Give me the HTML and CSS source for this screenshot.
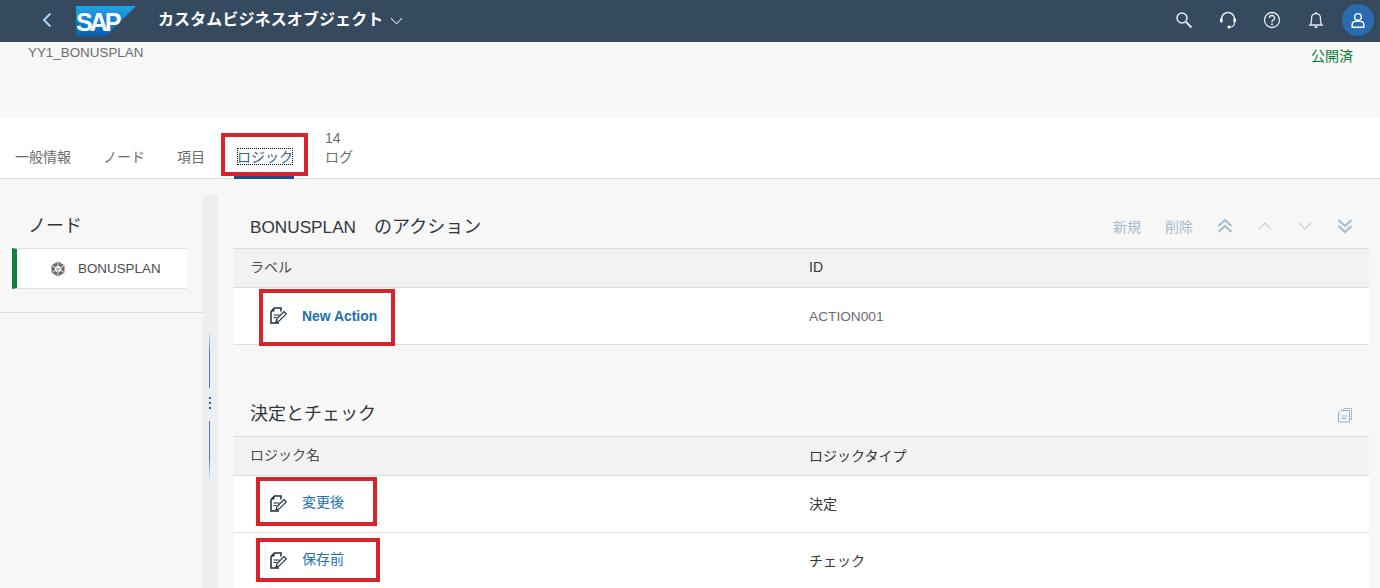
FILE: index.html
```html
<!DOCTYPE html>
<html lang="ja">
<head>
<meta charset="utf-8">
<title>カスタムビジネスオブジェクト</title>
<link rel="stylesheet" href="styles.css">
</head>
<body>
<header class="shell">
  <svg class="back" viewBox="0 0 12 18" width="12" height="18"><path d="M9.500 2.500 3 9l6.500 6.500" fill="none" stroke="#a9d0f5" stroke-width="2"/></svg>
  <svg class="logo" viewBox="0 0 60 30" width="60" height="30">
    <defs><linearGradient id="g" x1="0" y1="0" x2="0" y2="1"><stop offset="0" stop-color="#1ea5e8"/><stop offset="1" stop-color="#0a5fb4"/></linearGradient></defs>
    <polygon points="0,0 60,0 30,30 0,30" fill="url(#g)"/>
    <text x="0" y="24.500" class="logo-text">SAP</text>
  </svg>
  <h1 class="app-title">カスタムビジネスオブジェクト</h1>
  <svg class="caret" viewBox="0 0 14 8" width="13" height="8"><path d="M1 1l6 6 6-6" fill="none" stroke="#d5dde5" stroke-width="1.200"/></svg>
  <div class="shell-actions">
    <svg viewBox="0 0 18 18" width="18" height="18"><circle cx="7" cy="7" r="5" fill="none" stroke="#e3e8ed" stroke-width="1.500"/><path d="M11 11l5.500 5.500" stroke="#e3e8ed" stroke-width="2"/></svg>
    <svg viewBox="0 0 18 18" width="18" height="18"><path d="M2.500 9.500V8a6.500 6.500 0 0 1 13 0v1.500" fill="none" stroke="#e3e8ed" stroke-width="1.500"/><path d="M1 7.500h2.500v4h-1A1.500 1.500 0 0 1 1 10zM14.500 7.500H17V10a1.500 1.500 0 0 1-1.500 1.500h-1z" fill="#fff"/><path d="M15.500 11.500c0 3-2 4.500-5 4.500" fill="none" stroke="#e3e8ed" stroke-width="1.200"/><circle cx="10" cy="16" r="1.600" fill="#fff"/></svg>
    <svg viewBox="0 0 18 18" width="18" height="18"><circle cx="9" cy="9" r="7.500" fill="none" stroke="#e3e8ed" stroke-width="1.300"/><path d="M6.500 7a2.500 2.500 0 1 1 3.700 2.200C9.300 9.700 9 10.200 9 11.200" fill="none" stroke="#e3e8ed" stroke-width="1.400"/><circle cx="9" cy="13.300" r="1" fill="#e3e8ed"/></svg>
    <svg viewBox="0 0 18 18" width="18" height="18"><path d="M3 14c1.200-1 1.500-2.300 1.500-4.500V7a4.500 4.500 0 0 1 9 0v2.500c0 2.200.3 3.500 1.500 4.500z" fill="none" stroke="#e3e8ed" stroke-width="1.300"/><path d="M7.500 16h3" stroke="#e3e8ed" stroke-width="1.800"/><path d="M9 1v1.500" stroke="#e3e8ed" stroke-width="1.500"/></svg>
    <div class="avatar">
      <svg viewBox="0 0 18 18" width="16" height="17"><circle cx="9" cy="5" r="3.700" fill="none" stroke="#fff" stroke-width="1.600"/><path d="M2.500 16.500v-3a3.500 3.500 0 0 1 3.500-3.500h6a3.500 3.500 0 0 1 3.500 3.500v3z" fill="none" stroke="#fff" stroke-width="1.600"/></svg>
    </div>
  </div>
</header>

<section class="object-header">
  <span class="object-id">YY1_BONUSPLAN</span>
  <span class="status">公開済</span>
</section>

<nav class="tabs">
  <a class="tab">一般情報</a>
  <a class="tab">ノード</a>
  <a class="tab">項目</a>
  <a class="tab tab-active"><span class="focus">ロジック</span><i class="mark mark-tab"></i></a>
  <a class="tab tab-count"><span class="count">14</span>ログ</a>
</nav>

<main class="content">
  <aside class="side">
    <h2 class="side-title">ノード</h2>
    <div class="node">
      <svg viewBox="0 0 16 16" width="16" height="16">
        <path d="M8 .5l6.500 3.700v7.600L8 15.500l-6.500-3.700V4.200z" fill="#6e6e6e"/>
        <path d="M8 4.500l3.200 1.800v3.400L8 11.500 4.800 9.700V6.300z" fill="#f4f4f4"/>
        <path d="M8 .5v4M1.500 11.800l3.300-2.100M14.500 11.800l-3.300-2.100M1.500 4.200l3.300 2.100M14.500 4.200l-3.300 2.100M8 11.500v4" stroke="#f4f4f4" stroke-width=".9"/>
        <path d="M5.800 7.300 8 8.500l2.200-1.200M8 8.500v2" fill="none" stroke="#7a7a7a" stroke-width=".9"/>
      </svg>
      <span>BONUSPLAN</span>
    </div>
  </aside>
  <div class="splitter">
    <span class="split-line"></span>
    <span class="split-dots"></span>
    <span class="split-line split-line-b"></span>
  </div>
  <div class="main">
    <div class="toolbar toolbar-first">
      <h2 class="section-title"><span class="latin">BONUSPLAN</span>　のアクション</h2>
      <div class="tools">
        <span class="tool-text">新規</span>
        <span class="tool-text">削除</span>
        <svg class="tool-icon" viewBox="0 0 16 16" width="16" height="16"><path d="M1.500 8 8 2l6.500 6M1.500 14 8 8l6.500 6" fill="none" stroke="#a9bdd0" stroke-width="2.200"/></svg>
        <svg class="tool-icon" viewBox="0 0 16 16" width="16" height="16"><path d="M2 11l6-6 6 6" fill="none" stroke="#c6d0da" stroke-width="1.100"/></svg>
        <svg class="tool-icon" viewBox="0 0 16 16" width="16" height="16"><path d="M2 5l6 6 6-6" fill="none" stroke="#c6d0da" stroke-width="1.100"/></svg>
        <svg class="tool-icon" viewBox="0 0 16 16" width="16" height="16"><path d="M1.500 2 8 8l6.500-6M1.500 8 8 14l6.500-6" fill="none" stroke="#a9bdd0" stroke-width="2.200"/></svg>
      </div>
    </div>
    <div class="row row-head"><span class="col-a">ラベル</span><span class="col-b">ID</span></div>
    <div class="row">
      <span class="col-a link-cell">
        <svg class="doc" viewBox="0 0 17 17" width="17" height="17"><use href="#doc-icon"/></svg>
        <a class="link link-strong">New Action</a>
        <i class="mark mark-action"></i>
      </span>
      <span class="col-b muted">ACTION001</span>
    </div>

    <div class="toolbar toolbar-second">
      <h2 class="section-title">決定とチェック</h2>
      <div class="tools">
        <svg class="copy" viewBox="0 0 16 16" width="16" height="16"><path d="M5.500 3.500 7.500 1.500H14.500V12.500H12.500" fill="none" stroke="#a9bdd0" stroke-width="1"/><path d="M1.500 6 4 3.500H12.500V15H1.500z" fill="#f7f7f7" stroke="#97afc6" stroke-width="1"/><path d="M4.500 9h5M4.500 11.500h5" stroke="#97afc6"/></svg>
      </div>
    </div>
    <div class="row row-head"><span class="col-a">ロジック名</span><span class="col-b">ロジックタイプ</span></div>
    <div class="row">
      <span class="col-a link-cell">
        <svg class="doc" viewBox="0 0 17 17" width="17" height="17"><use href="#doc-icon"/></svg>
        <a class="link">変更後</a>
        <i class="mark mark-after"></i>
      </span>
      <span class="col-b col-cjk">決定</span>
    </div>
    <div class="row row-last">
      <span class="col-a link-cell">
        <svg class="doc" viewBox="0 0 17 17" width="17" height="17"><use href="#doc-icon"/></svg>
        <a class="link">保存前</a>
        <i class="mark mark-before"></i>
      </span>
      <span class="col-b col-cjk">チェック</span>
    </div>
  </div>
</main>

<svg class="defs" width="0" height="0">
  <defs>
    <g id="doc-icon">
      <path d="M1 4.500 4.500 1h6.500V4.500M1 4.500v11.500h8" fill="none" stroke="#1d2d3e" stroke-width="1.500"/>
      <path d="M1 4.500h3.500V1z" fill="#1d2d3e"/>
      <path d="M6 15 7 11.500 14 4.500 16.300 6.800 9.300 13.800z" fill="#fff" stroke="#1d2d3e" stroke-width="1.200"/>
      <path d="M3.500 8h6M3.500 10.500h3" stroke="#1d2d3e"/>
    </g>
  </defs>
</svg>
</body>
</html>
```

FILE: styles.css
```css
* { box-sizing: border-box; }
html, body { margin: 0; padding: 0; }
body {
  width: 1380px;
  height: 588px;
  overflow: hidden;
  background: #f7f7f7;
  color: #32363a;
  font-family: "Liberation Sans", "Noto Sans CJK JP", sans-serif;
  font-size: 14px;
}
h1, h2 { margin: 0; font-weight: 400; }

.shell {
  display: flex;
  align-items: center;
  height: 42px;
  padding-left: 41px;
  background: #354a5f;
}
.back { flex: none; margin-bottom: 2px; }
.logo { flex: none; margin-left: 23px; }
.logo-text {
  font-family: "Liberation Sans", sans-serif;
  font-size: 25px;
  font-weight: 700;
  letter-spacing: -3px;
  fill: #fff;
}
.app-title {
  margin: -6px 0 0 22px;
  font-family: "Noto Sans CJK JP", sans-serif;
  font-size: 16px;
  font-weight: 700;
  color: #fff;
  white-space: nowrap;
  letter-spacing: .1px;
}
.caret { flex: none; margin-left: 7px; margin-top: -1px; }
.shell-actions {
  display: flex;
  align-items: center;
  gap: 26px;
  margin-left: auto;
  margin-bottom: 2px;
  padding-right: 6px;
}
.avatar {
  display: flex;
  align-items: center;
  justify-content: center;
  width: 32px;
  height: 32px;
  margin-left: -9px;
  border-radius: 50%;
  background: #2a6bb0;
}

.object-header {
  display: flex;
  justify-content: space-between;
  align-items: flex-start;
  height: 75px;
  padding: 3px 27px 0 28px;
  background: #f7f7f7;
}
.object-id { font-size: 13.400px; line-height: 16px; color: #6a6d70; }
.status {
  margin-top: -1px;
  font-family: "Noto Sans CJK JP", sans-serif;
  font-size: 14px;
  line-height: 22px;
  color: #107e3e;
}

.tabs {
  display: flex;
  align-items: flex-end;
  gap: 32px;
  height: 62px;
  padding: 0 0 0 15px;
  background: #fff;
  border-bottom: 1px solid #d9d9d9;
  box-shadow: 0 1px 2px rgba(0,0,0,.06);
  font-family: "Noto Sans CJK JP", sans-serif;
  color: #6a6d70;
}
.tab {
  position: relative;
  display: block;
  height: 32px;
  font-size: 14px;
  line-height: 20px;
}
.tab-active { color: #346187; }
.tab-active::after {
  content: "";
  position: absolute;
  left: -3px;
  right: -1px;
  bottom: -1px;
  height: 3px;
  background: #1c4c8c;
}
.focus { display: block; outline: 1px dotted #111; outline-offset: -1px; line-height: 17px; margin-top: 2px; }
.tab-count { height: 48px; }
.count {
  display: block;
  font-family: "Liberation Sans", sans-serif;
  font-size: 14px;
  line-height: 16px;
}

.mark {
  position: absolute;
  display: block;
  border: 4px solid #d8232a;
  pointer-events: none;
}
.mark-tab { left: -16px; top: -13px; width: 87px; height: 43px; z-index: 2; }
.mark-action { left: 25px; top: 1px; width: 136px; height: 57px; }
.mark-after { left: 22px; top: 1px; width: 121px; height: 49px; }
.mark-before { left: 22px; top: 5px; width: 124px; height: 44px; }

.content {
  display: flex;
  height: 409px;
  background: #f7f7f7;
}
.side {
  flex: none;
  width: 203px;
  height: 134px;
  padding: 34px 0 0 12px;
  border-bottom: 1px solid #dcdcdc;
}
.side-title {
  padding-left: 16px;
  font-family: "Noto Sans CJK JP", sans-serif;
  font-size: 18px;
  line-height: 22px;
  color: #32363a;
}
.node {
  display: flex;
  align-items: center;
  gap: 12px;
  width: 175px;
  height: 41px;
  margin-top: 13px;
  padding-left: 33px;
  background: #fff;
  border-left: 5px solid #107e3e;
  border-top: 1px solid #e2e2e2;
  border-bottom: 1px solid #e2e2e2;
  font-size: 13.400px;
  color: #4a4d50;
}
.splitter {
  position: relative;
  flex: none;
  display: flex;
  flex-direction: column;
  align-items: center;
  width: 15px;
  margin-top: 16px;
  padding: 135px 2px 0 0;
  background: #eceff2;
}
.split-line { width: 1px; height: 58px; background: linear-gradient(#eceff2, #4a7ab0 40%, #4a7ab0); }
.split-line-b { height: 60px; background: linear-gradient(#4a7ab0, #4a7ab0 60%, #eceff2); }
.split-dots {
  width: 2px;
  height: 14px;
  margin: 9px 0 10px;
  background: repeating-linear-gradient(#346187 0 2px, transparent 2px 5px);
}
.main {
  flex: none;
  width: 1135px;
  margin-left: 16px;
}
.toolbar {
  display: flex;
  justify-content: space-between;
  align-items: center;
  padding: 0 16px 0 16px;
}
.toolbar-first { height: 69px; padding-top: 26px; }
.toolbar-first .tools { margin-bottom: 2px; }
.toolbar-second { height: 91px; padding-top: 47px; }
.section-title {
  font-family: "Liberation Sans", "Noto Sans CJK JP", sans-serif;
  font-size: 18px;
  line-height: 22px;
  color: #32363a;
}
.latin { font-size: 17.200px; }
.tools { display: flex; align-items: center; gap: 24px; }
.tool-text {
  font-family: "Noto Sans CJK JP", sans-serif;
  font-size: 14px;
  color: #a9bbcc;
}
.tool-icon { flex: none; }
.copy { margin-top: 2px; }

.row {
  display: flex;
  align-items: center;
  height: 57px;
  background: #fff;
  border-bottom: 1px solid #e0e0e0;
}
.row-head {
  height: 40px;
  background: #f2f2f2;
  border-top: 1px solid #dcdcdc;
  border-bottom: 1px solid #dcdcdc;
  font-family: "Noto Sans CJK JP", sans-serif;
  color: #4a4d50;
}
.row-last { border-bottom: 0; }
.col-a {
  position: relative;
  display: flex;
  align-items: center;
  flex: none;
  width: 575px;
  height: 100%;
  padding-left: 16px;
  font-family: "Liberation Sans", "Noto Sans CJK JP", sans-serif;
}
.col-b { font-family: "Liberation Sans", "Noto Sans CJK JP", sans-serif; color: #32363a; }
.col-cjk { margin-top: -3px; }
.muted { color: #6a6d70; font-size: 13.700px; }
.row-head .col-a { align-items: flex-start; padding-top: 7px; }
.row-head .col-b { margin-top: -2px; }
.link-cell { padding-left: 36px; }
.doc { flex: none; margin-top: -2px; }
.link { margin-left: 15px; margin-top: -7px; color: #2070b0; font-size: 14px; }
.link-strong { margin-top: -1px; font-size: 13.900px; font-weight: 700; }
.defs { position: absolute; width: 0; height: 0; }
```
